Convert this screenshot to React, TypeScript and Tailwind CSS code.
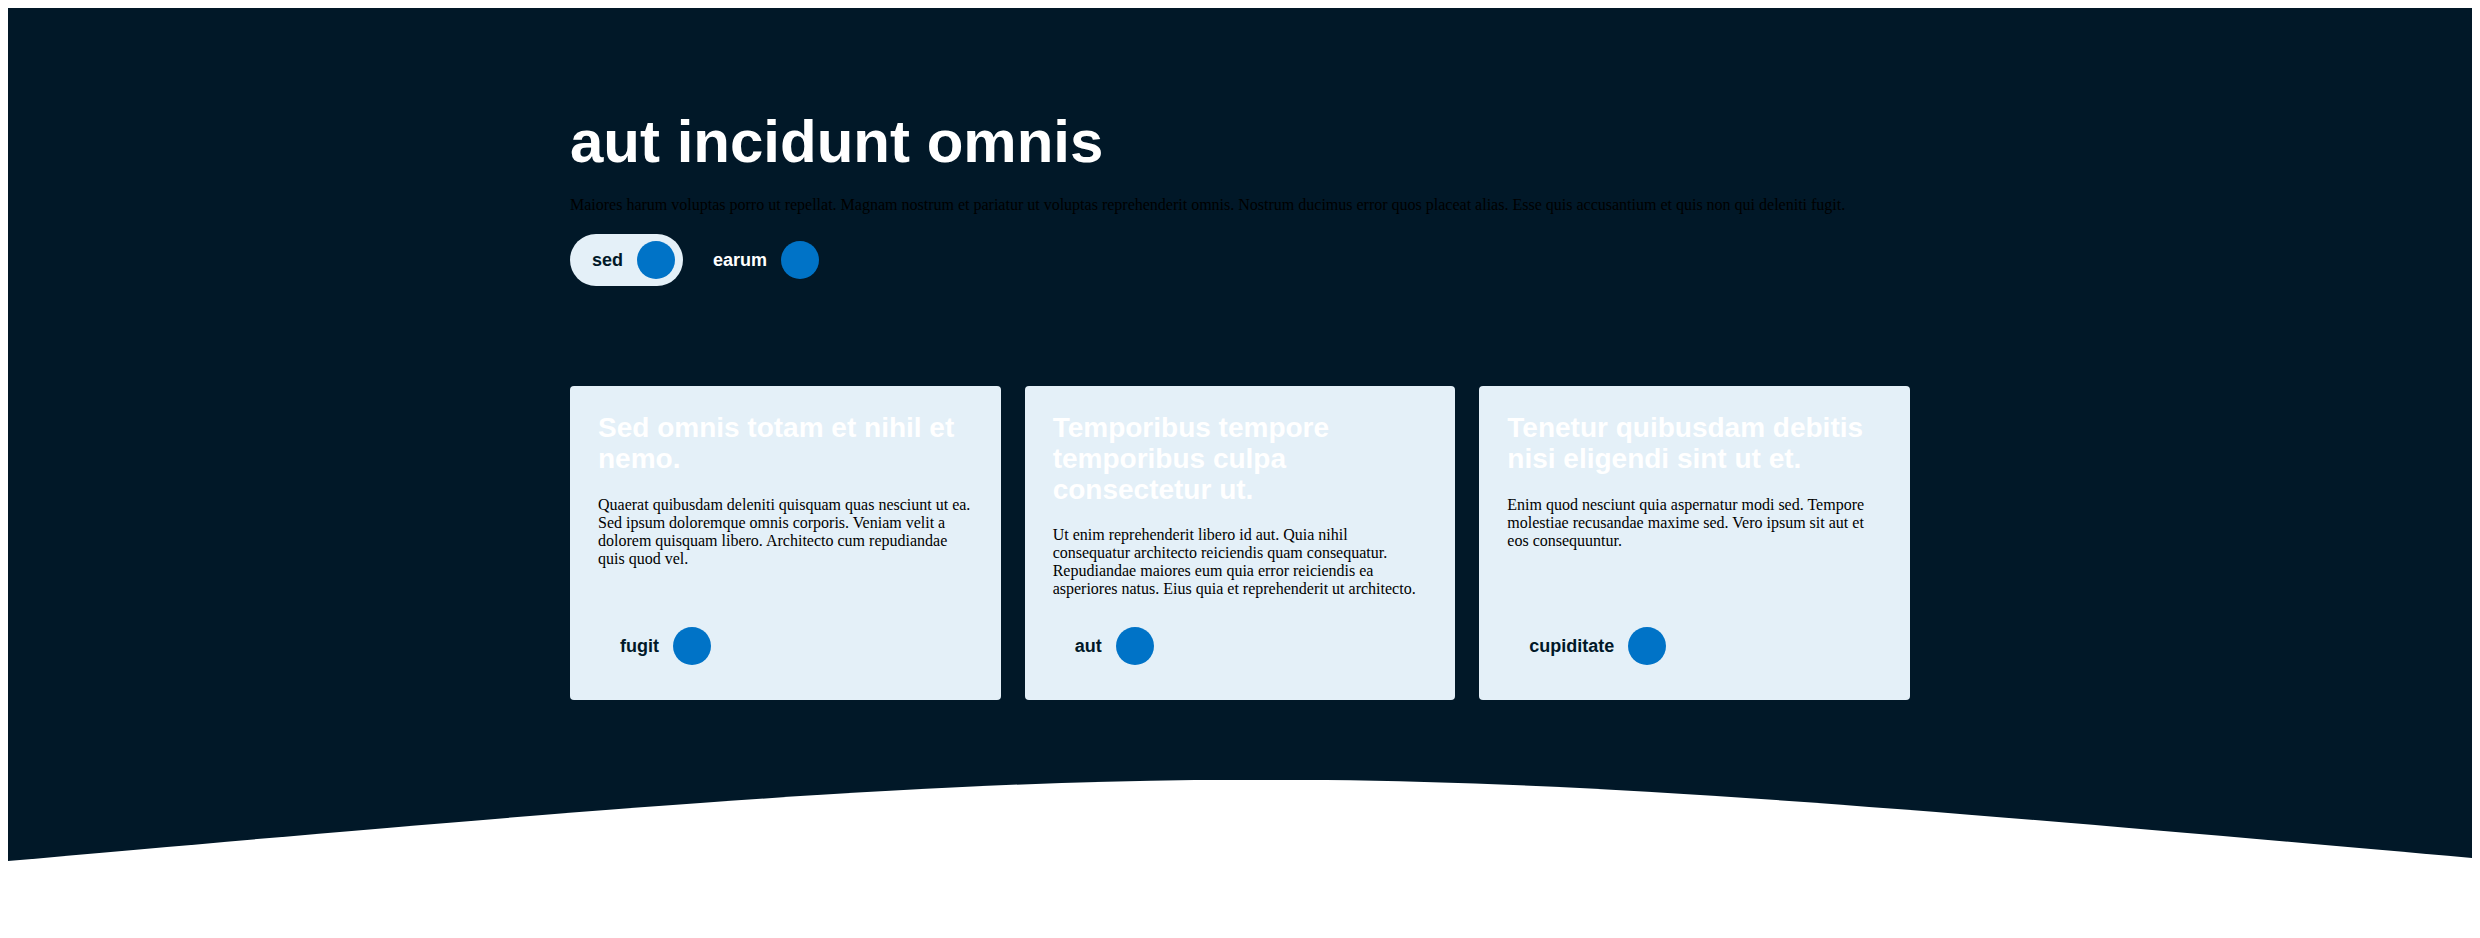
import clsx from 'clsx'

interface Card {
  title: string
  body: string
  action: string
}

const cards: Card[] = [
  {
    title: 'Sed omnis totam et nihil et nemo.',
    body: 'Quaerat quibusdam deleniti quisquam quas nesciunt ut ea. Sed ipsum doloremque omnis corporis. Veniam velit a dolorem quisquam libero. Architecto cum repudiandae quis quod vel.',
    action: 'fugit',
  },
  {
    title: 'Temporibus tempore temporibus culpa consectetur ut.',
    body: 'Ut enim reprehenderit libero id aut. Quia nihil consequatur architecto reiciendis quam consequatur. Repudiandae maiores eum quia error reiciendis ea asperiores natus. Eius quia et reprehenderit ut architecto.',
    action: 'aut',
  },
  {
    title: 'Tenetur quibusdam debitis nisi eligendi sint ut et.',
    body: 'Enim quod nesciunt quia aspernatur modi sed. Tempore molestiae recusandae maxime sed. Vero ipsum sit aut et eos consequuntur.',
    action: 'cupiditate',
  },
]

function PillButton({ label, ghost = false, className }: { label: string; ghost?: boolean; className?: string }) {
  return (
    <button
      type="button"
      className={clsx(
        'flex h-[52px] items-center gap-[14px] rounded-full pl-[22px] pr-2 text-[18px] font-bold leading-[21px]',
        ghost ? 'bg-transparent text-white' : 'bg-[#e4f0f8] text-[#011828]',
        className,
      )}
    >
      {label}
      <span className="block size-[38px] rounded-full bg-[#0073c7]" />
    </button>
  )
}

export default function App() {
  return (
    <div className="min-h-screen bg-white p-2 font-['Liberation_Sans',Arial,sans-serif]">
      <section className="bg-[#011828]">
        <div className="mx-auto w-[1340px] pt-[99px]">
          <h1 className="text-[60px] font-bold leading-[69px] text-white">aut incidunt omnis</h1>
          <p className="mt-[20px] font-['Liberation_Serif','Times_New_Roman',serif] text-[16px] leading-[18px] text-black">
            Maiores harum voluptas porro ut repellat. Magnam nostrum et pariatur ut voluptas reprehenderit omnis. Nostrum ducimus error quos placeat alias. Esse quis accusantium et quis non qui deleniti fugit.
          </p>
          <div className="mt-[20px] flex gap-2">
            <PillButton label="sed" />
            <PillButton label="earum" ghost />
          </div>

          {/* cards */}
          <div className="mt-[100px] grid grid-cols-3 gap-6">
            {cards.map(card => (
              <div key={card.action} className="flex flex-col rounded bg-[#e4f0f8] px-[28px] pb-[28px] pt-[27px]">
                <h2 className="text-[28px] font-bold leading-[1.1] text-white">{card.title}</h2>
                <p className="mb-[22px] mt-[21px] font-['Liberation_Serif','Times_New_Roman',serif] text-[16px] leading-[18px] text-black">
                  {card.body}
                </p>
                <PillButton label={card.action} className="mt-auto self-start" />
              </div>
            ))}
          </div>
        </div>

        {/* curved bottom edge */}
        <svg className="mt-[80px] block h-[82px] w-full" viewBox="0 0 2464 82" preserveAspectRatio="none">
          <path d="M0,82 L0,81 C1215,-27 1285,-27 2464,78 L2464,82 Z" fill="#ffffff" />
        </svg>
      </section>
    </div>
  )
}
